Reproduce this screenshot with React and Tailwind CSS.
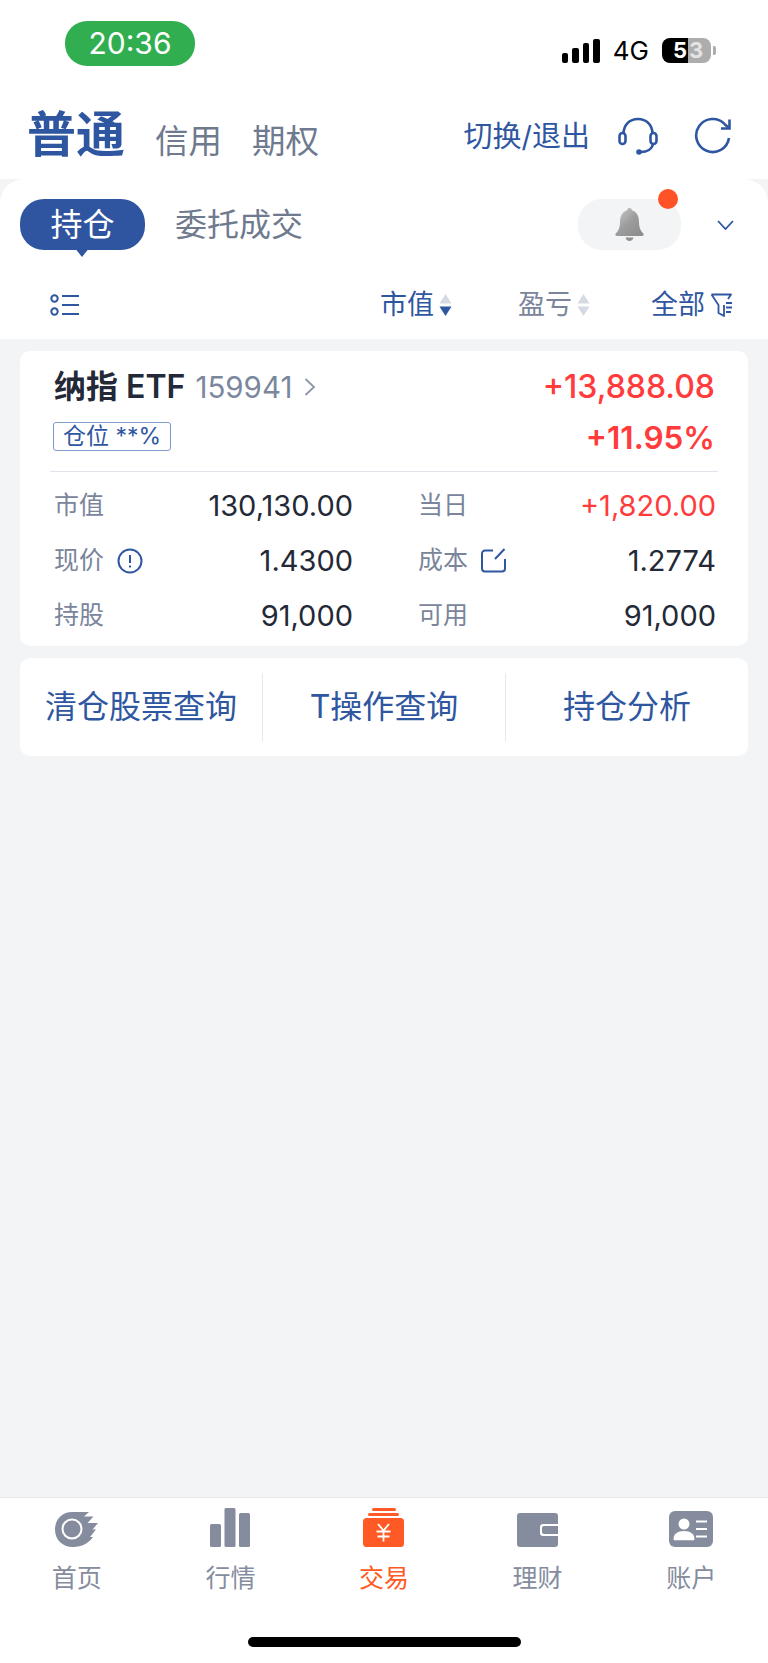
import { Fragment } from 'react';

const BLUE = '#2f56a0';

const SortArrows = ({ active }) => (
  <svg width="13" height="24" viewBox="0 0 13 24" className="ml-[5px]">
    <path d="M6.5 1 12.5 10.5H.5Z" fill="#d5d9e2" />
    <path d="M6.5 23 12.5 13.5H.5Z" fill={active ? BLUE : '#d5d9e2'} />
  </svg>
);

const Headset = () => (
  <svg width="40" height="40" viewBox="0 0 40 40" fill="none" stroke={BLUE} strokeWidth="2.6">
    <path d="M5.5 18C5.5 9 11.5 3 20 3s14.500 6 14.500 15" />
    <rect x="1.500" y="17" width="6" height="11" rx="3" />
    <rect x="32.500" y="17" width="6" height="11" rx="3" />
    <path d="M35 28c-1 5-6 8-12 8" />
    <circle cx="21" cy="36" r="2.800" fill={BLUE} stroke="none" />
  </svg>
);

const Refresh = () => (
  <svg width="38" height="38" viewBox="0 0 38 38" fill="none" stroke={BLUE} strokeWidth="2.600">
    <path d="M35 21a16.500 16.500 0 1 1-4-13.500L35 11" />
    <path d="M35.500 2.500V11.500H27" />
  </svg>
);

const Bell = () => (
  <svg width="33" height="33" viewBox="0 0 33 33">
    <defs>
      <linearGradient id="bellFill" x1="0" y1="0" x2="1" y2="1">
        <stop offset="0" stopColor="#cfcfcf" />
        <stop offset="0.5" stopColor="#9c9c9c" />
        <stop offset="1" stopColor="#8a8a8a" />
      </linearGradient>
    </defs>
    <path d="M16.500 0c1.500 0 2.300 1 2.500 2.300C24 4 26 8.500 26 14c0 5 1.300 8.500 3.800 11 1.500 1.500 1 3-1 3H4.200c-2 0-2.500-1.500-1-3C5.700 22.500 7 19 7 14c0-5.500 2-10 7-11.700C14.200 1 15 0 16.500 0Z" fill="url(#bellFill)" />
    <path d="M12.500 29.500h8c-.5 2-2 3.500-4 3.500s-3.500-1.500-4-3.500Z" fill="#8f8f8f" />
  </svg>
);

const ListIcon = () => (
  <svg width="30" height="22" viewBox="0 0 30 22" fill="none" stroke={BLUE} strokeWidth="2">
    <circle cx="4.500" cy="4.500" r="3.200" />
    <circle cx="4.500" cy="17.500" r="3.200" />
    <path d="M12 2h17M12 11h17M12 20h17" />
  </svg>
);

const FilterIcon = () => (
  <svg width="23" height="24" viewBox="0 0 23 24" fill="none" stroke={BLUE} strokeWidth="1.800">
    <path d="M1.500 1.500h19.500l-3 4.500M1.500 1.500l7 10.500v8l5.500 3v-11" strokeLinejoin="round" />
    <path d="M16 10h6M16 14.500h6M16 19h5" />
  </svg>
);

const InfoIcon = () => (
  <svg width="26" height="26" viewBox="0 0 26 26" fill="none" stroke={BLUE} strokeWidth="2">
    <circle cx="13" cy="13" r="11.500" />
    <path d="M13 7v8M13 17.500v2" />
  </svg>
);

const EditIcon = () => (
  <svg width="25" height="25" viewBox="0 0 25 25" fill="none" stroke={BLUE} strokeWidth="2">
    <path d="M12 2.500H4a3 3 0 0 0-3 3v15a3 3 0 0 0 3 3h17a3 3 0 0 0 3-3V11" />
    <path d="M14 11 23.500 1" />
  </svg>
);

const HomeIcon = () => (
  <svg width="44" height="35" viewBox="0 0 44 35">
    <path d="M17 0h17l-5 4.500h9.500l-6 6.500H43l-5.500 6.500H41l-6 7.500h3c-4 6-11 10-20 10C7 35 0 27.500 0 17.500S7 0 17 0Z" fill="#858c9e" />
    <circle cx="17" cy="17" r="9.500" fill="none" stroke="#fff" strokeWidth="2" />
  </svg>
);

const BarsIcon = () => (
  <svg width="40" height="39" viewBox="0 0 40 39" fill="#858c9e">
    <rect x="0" y="16" width="11" height="23" rx="1.500" />
    <rect x="14.500" y="0" width="11" height="39" rx="1.500" />
    <rect x="29" y="5" width="11" height="34" rx="1.500" />
  </svg>
);

const TradeIcon = () => (
  <svg width="41" height="39" viewBox="0 0 41 39">
    <rect x="9" y="0" width="24" height="3" rx="1.500" fill="#ff5a26" />
    <rect x="5" y="5" width="31" height="3" rx="1.500" fill="#ff5a26" />
    <rect x="0" y="10" width="41" height="29" rx="3.500" fill="#ff5a26" />
    <path d="M15 16l5.500 6.500L26 16M13.500 23.500h14M14.500 28.500h12M20.500 22.500v11" fill="none" stroke="#fff" strokeWidth="1.800" />
  </svg>
);

const WalletIcon = () => (
  <svg width="41" height="34" viewBox="0 0 41 34">
    <path d="M3 0h35a3 3 0 0 1 3 3v8H26a3 3 0 0 0-3 3v6a3 3 0 0 0 3 3h15v8a3 3 0 0 1-3 3H3a3 3 0 0 1-3-3V3a3 3 0 0 1 3-3Z" fill="#858c9e" />
    <path d="M41 13H27a2 2 0 0 0-2 2v4a2 2 0 0 0 2 2h14Z" fill="#858c9e" />
  </svg>
);

const ContactIcon = () => (
  <svg width="44" height="36" viewBox="0 0 44 36">
    <rect width="44" height="36" rx="6" fill="#858c9e" />
    <circle cx="15" cy="13" r="5.500" fill="#fff" />
    <path d="M4.500 28c0-5 4-8 10.500-8s10.500 3 10.500 8c0 .8-.5 1.300-1.300 1.300H5.800c-.8 0-1.300-.5-1.300-1.300Z" fill="#fff" />
    <path d="M27 10.500h11M27 18h11M27 25.500h11" stroke="#fff" strokeWidth="2.200" />
  </svg>
);

const tabs = [
  { label: '首页', icon: <HomeIcon /> },
  { label: '行情', icon: <BarsIcon /> },
  { label: '交易', icon: <TradeIcon />, active: true },
  { label: '理财', icon: <WalletIcon /> },
  { label: '账户', icon: <ContactIcon /> },
];

const Stat = ({ label, icon, value, valueClass = 'text-[#232936]', className = '' }) => (
  <div className={`flex items-center h-[55px] ${className}`}>
    <span className="text-[25px] text-[#7a859b]">{label}</span>
    {icon && <span className="ml-[13px] flex items-center">{icon}</span>}
    <span className={`ml-auto text-[29px] ${valueClass}`}>{value}</span>
  </div>
);

export default function App() {
  return (
    <div className="w-[768px] h-[1663px] flex flex-col bg-[#f3f4f6] font-['Inter','Noto_Sans_CJK_SC',sans-serif] overflow-hidden">
      {/* Header */}
      <div className="h-[179px] bg-white flex flex-col shrink-0">
        <div className="flex h-[104px] items-start">
          <div className="ml-[65px] mt-[21px] w-[130px] h-[45px] rounded-[22px] bg-[#30ae50] text-white text-[30px] flex items-center justify-center">
            20:36
          </div>
          <div className="ml-auto mr-[52px] mt-[38px] flex items-end h-[25px]">
            <div className="flex items-end gap-[4px] h-[24px]">
              <div className="w-[6.500px] h-[10px] bg-black rounded-[2px]" />
              <div className="w-[6.500px] h-[15px] bg-black rounded-[2px]" />
              <div className="w-[6.500px] h-[20px] bg-black rounded-[2px]" />
              <div className="w-[6.500px] h-[24px] bg-black rounded-[2px]" />
            </div>
            <span className="ml-[13px] text-[26px] leading-[25px] text-black">4G</span>
            <div className="ml-[13px] w-[49px] h-[25px] flex text-[22px] font-bold leading-[25px]">
              <div className="w-[26px] rounded-l-[8px] bg-black text-white text-right pr-[1px]">5</div>
              <div className="w-[23px] rounded-r-[8px] bg-[#adadad] text-[#e4e4e4] pl-[1px]">3</div>
            </div>
            <div className="ml-[2px] mb-[8px] w-[3px] h-[9px] bg-[#adadad] rounded-r-[2px]" />
          </div>
        </div>
        <div className="flex items-center h-[60px] pl-[27px]">
          <span className="text-[49px] font-bold text-[#2f56a0] leading-none">普通</span>
          <span className="ml-[30px] mt-[16px] text-[33.500px] text-[#6f7a8f] leading-none">信用</span>
          <span className="ml-[30px] mt-[16px] text-[33.500px] text-[#6f7a8f] leading-none">期权</span>
          <span className="ml-auto mt-[4px] text-[29px] text-[#2f56a0] leading-none">切换/退出</span>
          <span className="ml-[28px] mt-[4px] flex"><Headset /></span>
          <span className="ml-[36px] mr-[36px] mt-[4px] flex"><Refresh /></span>
        </div>
      </div>

      {/* Tabs and column heads */}
      <div className="h-[160px] shrink-0 bg-white rounded-t-[24px] flex flex-col">
        <div className="flex items-start pt-[20px] h-[88px]">
          <div className="relative ml-[20px] w-[125px] h-[51px] rounded-[24px] bg-[#2f55a0] text-white text-[32px] flex items-center justify-center">
            持仓
            <div className="absolute left-[52px] bottom-[-7px] w-[20px] h-[10px] flex justify-center">
              <svg width="20" height="10" viewBox="0 0 20 10"><path d="M2 0h16l-8 10Z" fill="#2f55a0" /></svg>
            </div>
          </div>
          <span className="ml-[30px] h-[51px] flex items-center text-[32px] text-[#6f7a8f]">委托成交</span>
          <div className="relative ml-auto w-[103px] h-[51px] rounded-[24px] bg-[#f3f4f6] flex items-center justify-center">
            <Bell />
            <div className="absolute right-[3px] top-[-10px] w-[20px] h-[20px] rounded-full bg-[#ff5226]" />
          </div>
          <span className="ml-[36px] mr-[34px] mt-[21px] flex">
            <svg width="17" height="10" viewBox="0 0 17 10" fill="none" stroke={BLUE} strokeWidth="1.800"><path d="M1 1l7.500 8L16 1" /></svg>
          </span>
        </div>
        <div className="flex items-center h-[36px] mt-[20px] pl-[50px]">
          <ListIcon />
          <span className="ml-auto text-[27px] text-[#2f56a0]">市值</span>
          <SortArrows active />
          <span className="ml-[66px] text-[27px] text-[#7a859b]">盈亏</span>
          <SortArrows />
          <span className="ml-[61px] text-[27px] text-[#2f56a0]">全部</span>
          <span className="ml-[5px] mr-[35px] flex"><FilterIcon /></span>
        </div>
      </div>

      {/* Cards */}
      <div className="flex-1 px-[20px] pt-[12px]">
        <div className="h-[295px] bg-white rounded-[10px] pl-[34px] pr-[32px] flex flex-col">
          <div className="flex items-center h-[71px] pt-[1px]">
            <span className="text-[32px] font-semibold text-[#232936]">纳指 ETF</span>
            <span className="ml-[10px] text-[29.500px] text-[#7b879d]">159941</span>
            <svg width="12" height="18" viewBox="0 0 12 18" fill="none" stroke="#8d97a9" strokeWidth="1.800" className="ml-[12px]"><path d="M1.500 1 10 9l-8.500 8" /></svg>
            <span className="ml-auto mr-[1px] text-[32px] font-medium text-[#ff3b3b]">+13,888.08</span>
          </div>
          <div className="flex items-start">
            <span className="-ml-[1px] h-[29px] px-[9px] rounded-[3px] border border-[#7f9bcb] text-[23px] leading-[26px] text-[#2f56a0]">仓位 **%</span>
            <span className="ml-auto mr-[1px] text-[31.500px] leading-[32px] font-semibold text-[#ff3b3b]">+11.95%</span>
          </div>
          <div className="h-[1px] -ml-[4px] -mr-[2px] mt-[17px] bg-[#e2e4ec]" />
          <div className="grid grid-cols-2 gap-x-[66px] pt-[6px]">
            <Stat label="市值" value="130,130.00" className="-mr-[1px]" />
            <Stat label="当日" value="+1,820.00" valueClass="text-[#ff3b3b]" />
            <Stat label="现价" icon={<InfoIcon />} value="1.4300" className="-mr-[1px]" />
            <Stat label="成本" icon={<EditIcon />} value="1.2774" />
            <Stat label="持股" value="91,000" className="-mr-[1px]" />
            <Stat label="可用" value="91,000" />
          </div>
        </div>

        <div className="mt-[12px] h-[98px] bg-white rounded-[10px] flex items-center text-[32px] text-[#2f56a0]">
          {['清仓股票查询', 'T操作查询', '持仓分析'].map((item, i) => (
            <Fragment key={item}>
              {i > 0 && <div className="w-[1px] h-[69px] bg-[#e8e9ee]" />}
              <div className={`flex justify-center ${i === 2 ? 'flex-1' : 'w-[242px]'}`}>{item}</div>
            </Fragment>
          ))}
        </div>
      </div>

      {/* Bottom nav */}
      <div className="h-[166px] shrink-0 bg-white border-t border-[#e4e6ea] flex flex-col">
        <div className="grid grid-cols-5 h-[139px]">
          {tabs.map((tab) => (
            <div key={tab.label} className="flex flex-col items-center">
              <div className="h-[49px] flex items-end">{tab.icon}</div>
              <span className={`mt-[13px] text-[25px] leading-[36px] ${tab.active ? 'text-[#ff5a26]' : 'text-[#858c9e]'}`}>{tab.label}</span>
            </div>
          ))}
        </div>
        <div className="mx-auto w-[273px] h-[10px] rounded-full bg-black" />
      </div>
    </div>
  );
}
